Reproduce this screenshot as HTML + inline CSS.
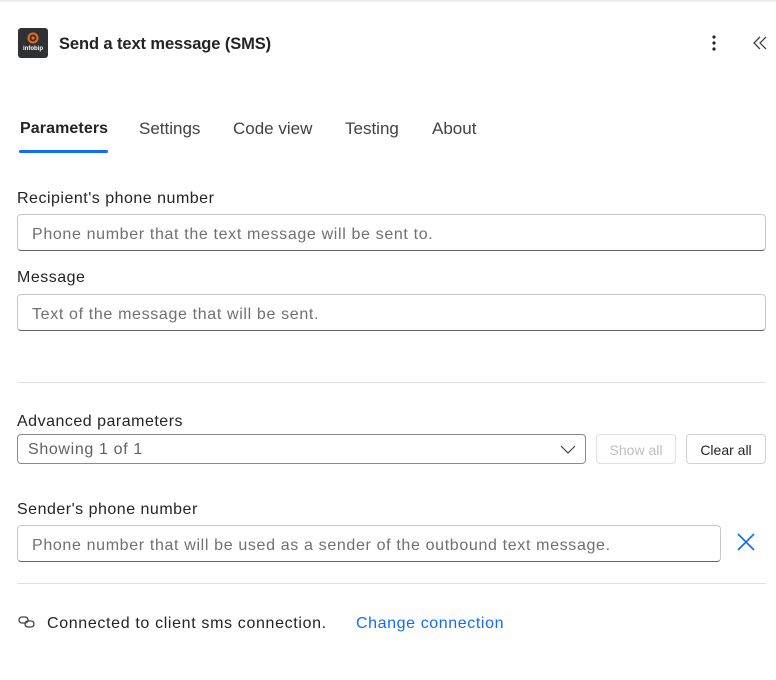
<!DOCTYPE html>
<html><head><meta charset="utf-8"><style>
*{box-sizing:border-box;margin:0;padding:0}
body{width:776px;height:680px;background:#fff;font-family:"Liberation Sans",sans-serif;color:#242424;position:relative;overflow:hidden}
.a{position:absolute;white-space:nowrap}
.topline{left:0;top:0;width:776px;height:3px;background:linear-gradient(#e6e6e6,#fff)}
.logo{left:18px;top:28px;width:30px;height:30px;background:#2f3133;border-radius:3px}
.title{left:59px;top:35px;font-size:16.5px;font-weight:bold;color:#242424;letter-spacing:-0.1px}
.tab{top:119px;font-size:17px;color:#424242}
.lbl{font-size:16px;color:#242424;left:17px;letter-spacing:0.5px}
.inp{left:17px;width:749px;height:37px;border:1px solid #c8c8c8;border-bottom:1px solid #616161;border-radius:4px;font-size:16px;color:#707070;padding:11px 14px 0;letter-spacing:0.65px}
.hr{left:17px;width:749px;height:1px;background:#e0e0e0}
.btn{top:434px;height:30px;border:1px solid #d1d1d1;border-radius:4px;font-size:14px;padding-top:7px;text-align:center}
</style></head><body>
<div class="a topline"></div>
<div class="a logo"><svg width="30" height="30"><circle cx="15" cy="10" r="4.5" fill="none" stroke="#f06a25" stroke-width="2"/><circle cx="15" cy="10" r="1.6" fill="#f06a25"/><text x="15" y="22" font-size="6" fill="#fff" text-anchor="middle" font-weight="bold" font-family="Liberation Sans">infobip</text></svg></div>
<div class="a title">Send a text message (SMS)</div>
<svg class="a" style="left:708px;top:34px" width="12" height="18"><circle cx="6" cy="3" r="1.6" fill="#242424"/><circle cx="6" cy="9" r="1.6" fill="#242424"/><circle cx="6" cy="15" r="1.6" fill="#242424"/></svg>
<svg class="a" style="left:752px;top:35px" width="16" height="16"><path d="M8 2L2 8l6 6M14 2L8 8l6 6" fill="none" stroke="#424242" stroke-width="1.3"/></svg>
<div class="a tab" style="left:20px;top:120px;font-weight:bold;color:#242424;font-size:16px;letter-spacing:0.1px">Parameters</div>
<div class="a" style="left:19px;top:150px;width:89px;height:3px;background:#0f6cfd;border-radius:2px"></div>
<div class="a tab" style="left:139px">Settings</div>
<div class="a tab" style="left:233px">Code view</div>
<div class="a tab" style="left:345px">Testing</div>
<div class="a tab" style="left:432px">About</div>
<div class="a lbl" style="top:190px">Recipient's phone number</div>
<div class="a inp" style="top:214px">Phone number that the text message will be sent to.</div>
<div class="a lbl" style="top:269px">Message</div>
<div class="a inp" style="top:294px">Text of the message that will be sent.</div>
<div class="a hr" style="top:382px"></div>
<div class="a lbl" style="top:413px">Advanced parameters</div>
<div class="a inp" style="top:434px;width:569px;height:30px;padding:6px 10px 0;color:#616161;border-color:#8a8a8a">Showing 1 of 1</div>
<svg class="a" style="left:560px;top:443px" width="16" height="12"><path d="M1 3l7 7 7-7" fill="none" stroke="#424242" stroke-width="1.2"/></svg>
<div class="a btn" style="left:596px;width:80px;color:#bdbdbd;border-color:#e0e0e0">Show all</div>
<div class="a btn" style="left:686px;width:80px;color:#242424">Clear all</div>
<div class="a lbl" style="top:501px">Sender's phone number</div>
<div class="a inp" style="top:525px;width:704px">Phone number that will be used as a sender of the outbound text message.</div>
<svg class="a" style="left:737px;top:533px" width="18" height="18"><path d="M1 1l16 16M17 1L1 17" stroke="#0f6cfd" stroke-width="1.6"/></svg>
<div class="a hr" style="top:583px"></div>
<svg class="a" style="left:18px;top:614px" width="18" height="16"><rect x="1" y="3" width="9" height="6" rx="3" fill="none" stroke="#424242" stroke-width="1.3"/><rect x="7" y="7" width="9" height="6" rx="3" fill="none" stroke="#424242" stroke-width="1.3"/></svg>
<div class="a" style="left:47px;top:615px;font-size:16px;letter-spacing:0.65px">Connected to client sms connection.</div>
<div class="a" style="left:356px;top:615px;font-size:16px;color:#0f6cfd;letter-spacing:0.6px">Change connection</div>
</body></html>
